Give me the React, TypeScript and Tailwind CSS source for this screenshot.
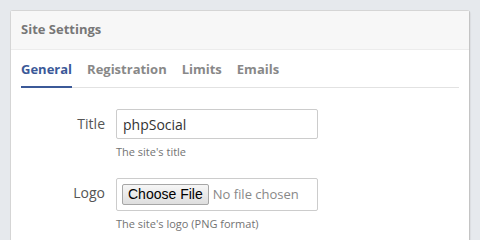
import React from "react";

const tabs = ["General", "Registration", "Limits", "Emails"];

const Row = ({ label, help, children }: { label: string; help: string; children: React.ReactNode }) => (
  <div className="flex items-start">
    <label className="w-[84px] pt-[5px] text-right text-[14px] leading-[20px] text-[#555]">{label}</label>
    <div className="ml-[11px] flex flex-col">
      {children}
      <p className="mt-[6px] text-[11px] leading-[14px] text-[#737373]">{help}</p>
    </div>
  </div>
);

const App = () => {
  return (
    <div className="h-[240px] w-[480px] overflow-hidden bg-[#e6e9ed] p-[10px] font-['Open_Sans',sans-serif]">
      <div className="h-[250px] rounded-[3px] border border-[#d5d5d5] border-r-[#c4c4c4] bg-white shadow-[1px_1px_1px_rgba(0,0,0,0.05)]">
        <div className="flex h-[39px] items-center border-b border-[#ececec] bg-[#f7f7f7] px-[10px]">
          <h3 className="text-[13px] font-bold text-[#777]">Site Settings</h3>
        </div>
        <div className="px-[10px]">
          <div className="flex gap-[15px] border-b border-[#e2e2e2] pt-[10px]">
            {tabs.map((t, i) => (
              <div
                key={t}
                className={
                  i === 0
                    ? "-mb-px border-b-[2px] border-[#3b5998] pb-[8px] text-[13px] font-bold leading-[18px] text-[#3b5998]"
                    : "-mb-px border-b-[2px] border-transparent pb-[8px] text-[13px] font-bold leading-[18px] text-[#888]"
                }
              >
                {t}
              </div>
            ))}
          </div>
          <div className="flex flex-col gap-[19px] pt-[21px]">
            <Row label="Title" help="The site's title">
              <div className="flex h-[30px] w-[202px] items-center rounded-[2px] border border-[#ccc] px-[6px] text-[14px] text-[#333]">
                phpSocial
              </div>
            </Row>
            <Row label="Logo" help="The site's logo (PNG format)">
              <div className="flex h-[33px] w-[202px] items-center rounded-[2px] border border-[#ccc] px-[5px]">
                <span className="flex h-[21px] items-center rounded-[2px] border border-[#a6a6a6] bg-gradient-to-b from-[#f6f6f6] to-[#dedede] px-[5px] font-['Liberation_Sans',sans-serif] text-[14px] text-black">
                  Choose File
                </span>
                <span className="ml-[4px] text-[13px] text-[#888]">No file chosen</span>
              </div>
            </Row>
          </div>
        </div>
      </div>
    </div>
  );
};

export default App;
